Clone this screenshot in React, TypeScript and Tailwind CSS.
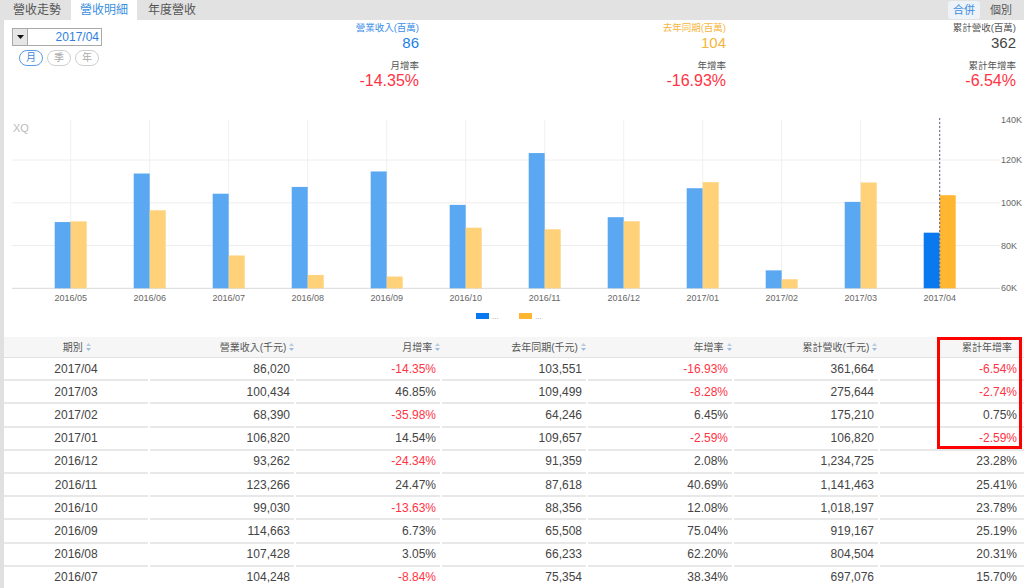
import type { ReactNode } from 'react'

const chart = [
  { m: '2016/05', rev: 91.0, last: 91.3 },
  { m: '2016/06', rev: 113.7, last: 96.5 },
  { m: '2016/07', rev: 104.248, last: 75.354 },
  { m: '2016/08', rev: 107.428, last: 66.233 },
  { m: '2016/09', rev: 114.663, last: 65.508 },
  { m: '2016/10', rev: 99.03, last: 88.356 },
  { m: '2016/11', rev: 123.266, last: 87.618 },
  { m: '2016/12', rev: 93.262, last: 91.359 },
  { m: '2017/01', rev: 106.82, last: 109.657 },
  { m: '2017/02', rev: 68.39, last: 64.246 },
  { m: '2017/03', rev: 100.434, last: 109.499 },
  { m: '2017/04', rev: 86.02, last: 103.551 },
]

const rows = [
  ['2017/04', '86,020', '-14.35%', '103,551', '-16.93%', '361,664', '-6.54%'],
  ['2017/03', '100,434', '46.85%', '109,499', '-8.28%', '275,644', '-2.74%'],
  ['2017/02', '68,390', '-35.98%', '64,246', '6.45%', '175,210', '0.75%'],
  ['2017/01', '106,820', '14.54%', '109,657', '-2.59%', '106,820', '-2.59%'],
  ['2016/12', '93,262', '-24.34%', '91,359', '2.08%', '1,234,725', '23.28%'],
  ['2016/11', '123,266', '24.47%', '87,618', '40.69%', '1,141,463', '25.41%'],
  ['2016/10', '99,030', '-13.63%', '88,356', '12.08%', '1,018,197', '23.78%'],
  ['2016/09', '114,663', '6.73%', '65,508', '75.04%', '919,167', '25.19%'],
  ['2016/08', '107,428', '3.05%', '66,233', '62.20%', '804,504', '20.31%'],
  ['2016/07', '104,248', '-8.84%', '75,354', '38.34%', '697,076', '15.70%'],
]

const heads = ['期別', '營業收入(千元)', '月增率', '去年同期(千元)', '年增率', '累計營收(千元)', '累計年增率']

// chart geometry (svg coords, page x - 4, page y - 115)
const base = 173.3
const scale = 2.1375
const yOf = (v: number) => base - (v - 60) * scale
const cx = (i: number) => 66.7 + 79 * i

function SortIcon() {
  return <svg width="5" height="8" viewBox="0 0 5 8" className="ml-[3px] shrink-0">
    <path d="M2.5 0 L5 3 L0 3 Z" fill="#b9cde2" />
    <path d="M0 5 L5 5 L2.5 8 Z" fill="#9dbde0" />
  </svg>
}

function Stat({ label, value, sub, subValue, labelColor, valueColor, width }: { label: string, value: string, sub: string, subValue: string, labelColor: string, valueColor: string, width: string }) {
  return <div className={`${width} flex flex-col items-end pt-[2px]`}>
    <p className={`text-[9.5px] leading-[12px] ${labelColor}`}>{label}</p>
    <p className={`text-[15px] leading-[18px] ${valueColor}`}>{value}</p>
    <p className="mt-[8px] text-[9.5px] leading-[12px] text-[#555]">{sub}</p>
    <p className="text-[16px] leading-[18px] text-[#ff3344]">{subValue}</p>
  </div>
}

function Pill({ active, children }: { active?: boolean, children: ReactNode }) {
  return <span className={`flex h-[16px] w-[24px] items-center justify-center rounded-full border text-[10px] leading-none ${active ? 'border-[#5b9be6] text-[#3d86dc]' : 'border-[#cfcfcf] text-[#aaa]'}`}>{children}</span>
}

export default function App() {
  return <div className="h-[588px] w-[1024px] overflow-hidden bg-white font-['Liberation_Sans','Noto_Sans_CJK_TC',sans-serif] text-[#444]">
    <div className="flex h-[20px] items-stretch bg-[#e2e2e2] text-[12px]">
      <span className="flex items-center pl-[13px] pr-[10px] text-[#555]">營收走勢</span>
      <span className="flex items-center bg-white px-[9px] text-[#3b8fe0]">營收明細</span>
      <span className="flex items-center px-[11px] text-[#555]">年度營收</span>
      <div className="ml-auto flex items-center gap-[10px] pr-[12px] text-[11px]">
        <span className="rounded-[3px] bg-[#eef3f9] px-[5px] py-[1px] text-[#3b8fe0]">合併</span>
        <span className="text-[#555]">個別</span>
      </div>
    </div>

    <div className="border-l-4 border-[#e0e0e0]">
      <div className="flex h-[95px]">
        <div className="w-[110px] pl-[8px] pt-[8px]">
          <div className="flex h-[18px] w-[90px] border border-[#a9a9a9]">
            <span className="flex w-[15px] items-center justify-center border-r border-[#a9a9a9] bg-[#e6e6e6]">
              <svg width="7" height="4" viewBox="0 0 7 4"><path d="M0 0 L7 0 L3.5 4 Z" fill="#111" /></svg>
            </span>
            <span className="flex flex-1 items-center justify-end pr-[2px] text-[12px] text-[#2f7fe0]">2017/04</span>
          </div>
          <div className="ml-[7px] mt-[4px] flex gap-[4px]">
            <Pill active>月</Pill>
            <Pill>季</Pill>
            <Pill>年</Pill>
          </div>
        </div>
        <Stat width="w-[305px]" label="營業收入(百萬)" value="86" sub="月增率" subValue="-14.35%" labelColor="text-[#3a8ee6]" valueColor="text-[#1a7fe8]" />
        <Stat width="w-[307px]" label="去年同期(百萬)" value="104" sub="年增率" subValue="-16.93%" labelColor="text-[#f7b53d]" valueColor="text-[#f7b53d]" />
        <Stat width="w-[290px]" label="累計營收(百萬)" value="362" sub="累計年增率" subValue="-6.54%" labelColor="text-[#555]" valueColor="text-[#444]" />
      </div>

      <svg width="1020" height="222" className="block overflow-visible" overflow="visible" fontFamily="Liberation Sans, sans-serif">
        <text x="9" y="17" fontSize="11" fill="#bbb">XQ</text>
        {[120, 100, 80].map(v => <line key={v} x1="8" x2="996" y1={yOf(v)} y2={yOf(v)} stroke="#ededed" />)}
        {chart.map((d, i) => <line key={d.m} x1={cx(i)} x2={cx(i)} y1="5" y2={base} stroke="#f0f0f0" />)}
        <line x1="8" x2="996" y1={base} y2={base} stroke="#d9d9d9" />
        {chart.map((d, i) => {
          const hi = i === chart.length - 1
          return <g key={d.m}>
            <rect x={cx(i) - 16} y={yOf(d.rev)} width="16" height={base - yOf(d.rev)} fill={hi ? '#0a78ee' : '#5aa7f2'} />
            <rect x={cx(i)} y={yOf(d.last)} width="16" height={base - yOf(d.last)} fill={hi ? '#ffb630' : '#ffd27a'} />
            <text x={cx(i)} y="186" fontSize="9" fill="#666" textAnchor="middle">{d.m}</text>
          </g>
        })}
        <line x1={cx(11)} x2={cx(11)} y1="3" y2={base} stroke="#55608a" strokeDasharray="2 2" />
        {[140, 120, 100, 80, 60].map(v => <text key={v} x="997" y={Math.max(yOf(v) + 3, 8)} fontSize="9" fill="#666">{v}K</text>)}
        <rect x="472" y="198" width="13" height="6" fill="#0a78ee" />
        <text x="488" y="204" fontSize="8" fill="#999">...</text>
        <rect x="515" y="198" width="13" height="6" fill="#ffb630" />
        <text x="531" y="204" fontSize="8" fill="#999">...</text>
      </svg>

      <div className="relative">
        <div className="grid h-[21px] grid-cols-7 border-b border-[#e2e2e2] bg-[#f6f6f6] text-[10px] text-[#555]">
          {heads.map((h, i) => <div key={h} className={`flex items-center ${i === 0 ? 'justify-center' : i === 6 ? 'justify-end pr-[12px]' : 'justify-end pr-[1px]'}`}>
            {h}{i < 6 && <SortIcon />}
          </div>)}
        </div>
        {rows.map(r => <div key={r[0]} className="grid grid-cols-7 gap-x-[2px] text-[12px]">
          {r.map((c, i) => <div key={i} className={`flex h-[23.2px] items-center border-b-2 border-[#e8e8e8] ${i === 0 ? 'justify-center' : i === 6 ? 'justify-end pr-[7px]' : 'justify-end pr-[4px]'} ${c.startsWith('-') ? 'text-[#ff3344]' : 'text-[#444]'}`}>{c}</div>)}
        </div>)}
        <div className="absolute left-[933px] top-0 h-[112px] w-[85px] border-[3px] border-[#ff0000]" />
      </div>
    </div>
  </div>
}
